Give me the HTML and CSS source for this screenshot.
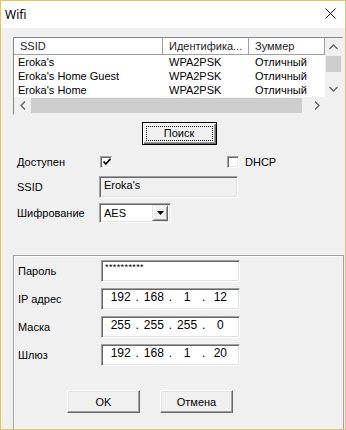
FILE: index.html
```html
<!DOCTYPE html>
<html lang="ru">
<head>
    <meta charset="UTF-8">
    <meta name="viewport" content="width=device-width, initial-scale=1.0">
    <title>Wifi</title>
    <link rel="stylesheet" href="styles.css">
</head>
<body>
    <div class="window">
        <div class="titlebar">
            <span class="title">Wifi</span>
            <svg class="close" width="11" height="11" viewBox="0 0 11 11">
                <path d="M0.5 0.5 L10.5 10.5 M10.5 0.5 L0.5 10.5" stroke="#000" stroke-width="1" fill="none"/>
            </svg>
        </div>

        <div class="content">
            <div class="listview">
                <div class="lv-main">
                    <div class="lv-header">
                        <div class="hcell c1">SSID</div>
                        <div class="hcell c2">Идентифика...</div>
                        <div class="hcell c3">Зуммер</div>
                    </div>
                    <div class="lv-row">
                        <div class="cell c1">Eroka's</div>
                        <div class="cell c2">WPA2PSK</div>
                        <div class="cell c3">Отличный</div>
                    </div>
                    <div class="lv-row">
                        <div class="cell c1">Eroka's Home Guest</div>
                        <div class="cell c2">WPA2PSK</div>
                        <div class="cell c3">Отличный</div>
                    </div>
                    <div class="lv-row">
                        <div class="cell c1">Eroka's Home</div>
                        <div class="cell c2">WPA2PSK</div>
                        <div class="cell c3">Отличный</div>
                    </div>
                </div>
                <div class="vscroll">
                    <div class="arrow">
                        <svg width="9" height="6" viewBox="0 0 9 6"><polyline points="0.5,5 4.5,1 8.5,5" stroke="#606060" stroke-width="1.3" fill="none"/></svg>
                    </div>
                    <div class="vtrack"><div class="vthumb"></div></div>
                    <div class="arrow">
                        <svg width="9" height="6" viewBox="0 0 9 6"><polyline points="0.5,1 4.5,5 8.5,1" stroke="#606060" stroke-width="1.3" fill="none"/></svg>
                    </div>
                </div>
                <div class="hscroll">
                    <div class="arrow">
                        <svg width="6" height="9" viewBox="0 0 6 9"><polyline points="5,0.5 1,4.5 5,8.5" stroke="#606060" stroke-width="1.3" fill="none"/></svg>
                    </div>
                    <div class="htrack"><div class="hthumb"></div></div>
                    <div class="arrow">
                        <svg width="6" height="9" viewBox="0 0 6 9"><polyline points="1,0.5 5,4.5 1,8.5" stroke="#606060" stroke-width="1.3" fill="none"/></svg>
                    </div>
                </div>
                <div class="corner"></div>
            </div>

            <div class="search-row">
                <button class="btn btn-default"><span class="focus">Поиск</span></button>
            </div>

            <div class="form-top">
                <div class="frow check-row">
                    <span class="label">Доступен</span>
                    <span class="checkbox">
                        <svg width="8" height="8" viewBox="0 0 8 8"><polyline points="0.5,3.5 2.8,6 7.5,0.8" stroke="#000" stroke-width="1.8" fill="none"/></svg>
                    </span>
                    <span class="dhcp">
                        <span class="checkbox"></span>
                        <span>DHCP</span>
                    </span>
                </div>
                <div class="frow ssid-row">
                    <span class="label">SSID</span>
                    <div class="field field-disabled">Eroka's</div>
                </div>
                <div class="frow combo-row">
                    <span class="label">Шифрование</span>
                    <div class="combo">
                        <span class="combo-text">AES</span>
                        <span class="combo-btn">
                            <svg width="7" height="4" viewBox="0 0 7 4"><polygon points="0,0 7,0 3.5,4" fill="#000"/></svg>
                        </span>
                    </div>
                </div>
            </div>

            <div class="group">
                <div class="grow">
                    <span class="label">Пароль</span>
                    <div class="field field-pass">**********</div>
                </div>
                <div class="grow">
                    <span class="label">IP адрес</span>
                    <div class="field field-ip">
                        <span class="seg">192</span><span class="dot">.</span><span class="seg">168</span><span class="dot">.</span><span class="seg">1</span><span class="dot">.</span><span class="seg">12</span>
                    </div>
                </div>
                <div class="grow">
                    <span class="label">Маска</span>
                    <div class="field field-ip">
                        <span class="seg">255</span><span class="dot">.</span><span class="seg">255</span><span class="dot">.</span><span class="seg">255</span><span class="dot">.</span><span class="seg">0</span>
                    </div>
                </div>
                <div class="grow">
                    <span class="label">Шлюз</span>
                    <div class="field field-ip">
                        <span class="seg">192</span><span class="dot">.</span><span class="seg">168</span><span class="dot">.</span><span class="seg">1</span><span class="dot">.</span><span class="seg">20</span>
                    </div>
                </div>

                <div class="actions">
                    <button class="btn">OK</button>
                    <button class="btn">Отмена</button>
                </div>
            </div>
        </div>
    </div>
</body>
</html>
```

FILE: styles.css
```css
body {
    margin: 0;
    padding: 0;
    font-family: "Liberation Sans", Arial, sans-serif;
    font-size: 11px;
    color: #000;
    background-color: #f0f0f0;
}

.window {
    width: 346px;
    height: 430px;
    box-sizing: border-box;
    border: 1px solid #e2c36c; /* bordure accent */
    background-color: #f0f0f0;
    overflow: hidden;
}

.titlebar {
    height: 27px;
    background-color: #fff;
    display: flex;
    align-items: center;
    justify-content: space-between;
    padding: 0 9px 0 4px;
}
.title {
    font-family: "Noto Sans", sans-serif;
    font-size: 12px;
    margin-top: -1px;
}
.close {
    margin-top: -2px;
}

.content {
    padding: 9px 1px 0 12px;
}

/* list */
.listview {
    width: 330px;
    height: 78px;
    box-sizing: border-box;
    border: 1px solid #828790;
    border-right-color: #f0f0f0;
    border-bottom-color: #f0f0f0;
    display: grid;
    grid-template-columns: 311px 17px;
    grid-template-rows: 59px 17px;
    background-color: #fff;
}
.lv-main {
    overflow: hidden;
}
.lv-header {
    display: flex;
    height: 17px;
    border-bottom: 1px solid #a0a0a0;
    box-sizing: border-box;
}
.hcell {
    box-sizing: border-box;
    border-right: 1px solid #a0a0a0;
    padding-left: 6px;
    line-height: 16px;
    color: #1e1e1e;
    white-space: nowrap;
}
.lv-row {
    display: flex;
    height: 14px;
    line-height: 14px;
}
.cell {
    box-sizing: border-box;
    padding-left: 6px;
    white-space: nowrap;
}
.cell.c1 {
    padding-left: 4px;
}
.c1 { width: 149px; }
.c2 { width: 86px; }
.c3 { width: 76px; }

.vscroll {
    background-color: #f0f0f0;
    display: flex;
    flex-direction: column;
}
.vscroll .arrow {
    height: 17px;
    display: flex;
    align-items: center;
    justify-content: center;
}
.vtrack {
    flex: 1;
    padding: 1px 1px 0 1px;
}
.vthumb {
    height: 16px;
    background-color: #cdcdcd;
}
.hscroll {
    background-color: #f0f0f0;
    display: flex;
}
.hscroll .arrow {
    width: 17px;
    display: flex;
    align-items: center;
    justify-content: center;
}
.htrack {
    flex: 1;
    padding: 1px 0;
}
.hthumb {
    width: 271px;
    height: 15px;
    background-color: #cdcdcd;
}
.corner {
    background-color: #f0f0f0;
}

/* buttons */
.btn {
    font-family: "Liberation Sans", Arial, sans-serif;
    font-size: 11px;
    color: #000;
    background-color: #f0f0f0;
    border: 1px solid;
    border-color: #fff #696969 #696969 #fff;
    box-shadow: inset -1px -1px #a0a0a0, inset 1px 1px #e3e3e3;
    width: 73px;
    height: 23px;
    padding: 0;
}
.btn-default {
    width: 75px;
    height: 23px;
    border: 1px solid #000;
    box-shadow: inset 1px 1px #fff, inset -1px -1px #696969, inset -2px -2px #a0a0a0;
    padding: 3px;
}
.focus {
    display: block;
    height: 100%;
    box-sizing: border-box;
    border: 1px dotted #000;
    line-height: 13px;
}

.search-row {
    width: 330px;
    display: flex;
    justify-content: center;
    margin-top: 7px;
    padding-left: 1px;
}

/* form top */
.form-top {
    padding-left: 4px;
}
.frow {
    display: flex;
    align-items: center;
}
.label {
    width: 83px;
    flex-shrink: 0;
}
.check-row {
    margin-top: 9px;
    height: 16px;
}
.checkbox {
    width: 12px;
    height: 12px;
    box-sizing: border-box;
    background-color: #fff;
    border: 1px solid;
    border-color: #a0a0a0 #fff #fff #a0a0a0;
    box-shadow: inset 1px 1px #696969, inset -1px -1px #e3e3e3;
    display: flex;
    align-items: center;
    justify-content: center;
    padding-left: 1px;
}
.dhcp {
    display: flex;
    align-items: center;
    gap: 6px;
    margin-left: 115px;
    margin-top: -1px;
}
.field {
    width: 139px;
    height: 21px;
    box-sizing: border-box;
    background-color: #fff;
    border: 1px solid;
    border-color: #a0a0a0 #fff #fff #a0a0a0;
    box-shadow: inset 1px 1px #696969, inset -1px -1px #e3e3e3;
    padding: 0 4px;
    line-height: 18px;
}
.ssid-row {
    margin-top: 6px;
}
.ssid-row .label {
    width: 82px;
}
.field-disabled {
    background-color: #f0f0f0;
    height: 22px;
    line-height: 16px;
}
.combo-row {
    margin-top: 5px;
}
.combo-row .label {
    width: 82px;
}
.combo {
    width: 72px;
    height: 20px;
    box-sizing: border-box;
    background-color: #fff;
    border: 1px solid;
    border-color: #a0a0a0 #fff #fff #a0a0a0;
    box-shadow: inset 1px 1px #696969, inset -1px -1px #e3e3e3;
    display: flex;
    align-items: center;
    justify-content: space-between;
    padding: 2px;
}
.combo-text {
    padding-left: 2px;
}
.combo-btn {
    width: 16px;
    height: 16px;
    box-sizing: border-box;
    background-color: #f0f0f0;
    border: 1px solid;
    border-color: #e3e3e3 #696969 #696969 #e3e3e3;
    box-shadow: inset 1px 1px #fff, inset -1px -1px #a0a0a0;
    display: flex;
    align-items: center;
    justify-content: center;
}

/* group */
.group {
    margin-top: 32px;
    width: 331px;
    height: 176px;
    box-sizing: border-box;
    border: 1px solid #a0a0a0;
    box-shadow: inset 1px 1px #fff;
    padding: 4px 0 0 4px;
}
.grow {
    display: flex;
    align-items: center;
    height: 22px;
    margin-bottom: 6px;
}
.field-pass {
    height: 22px;
    font-size: 9px;
    line-height: 12px;
    letter-spacing: 0.4px;
    padding-left: 3px;
}
.field-ip {
    height: 22px;
    display: flex;
    padding-left: 4px;
    line-height: 17px;
}
.seg {
    width: 30px;
    text-align: center;
    font-size: 12px;
}
.dot {
    width: 4px;
    text-align: center;
    font-size: 12px;
}

.actions {
    display: flex;
    gap: 20px;
    margin-top: 24px;
    margin-left: 49px;
}
```
